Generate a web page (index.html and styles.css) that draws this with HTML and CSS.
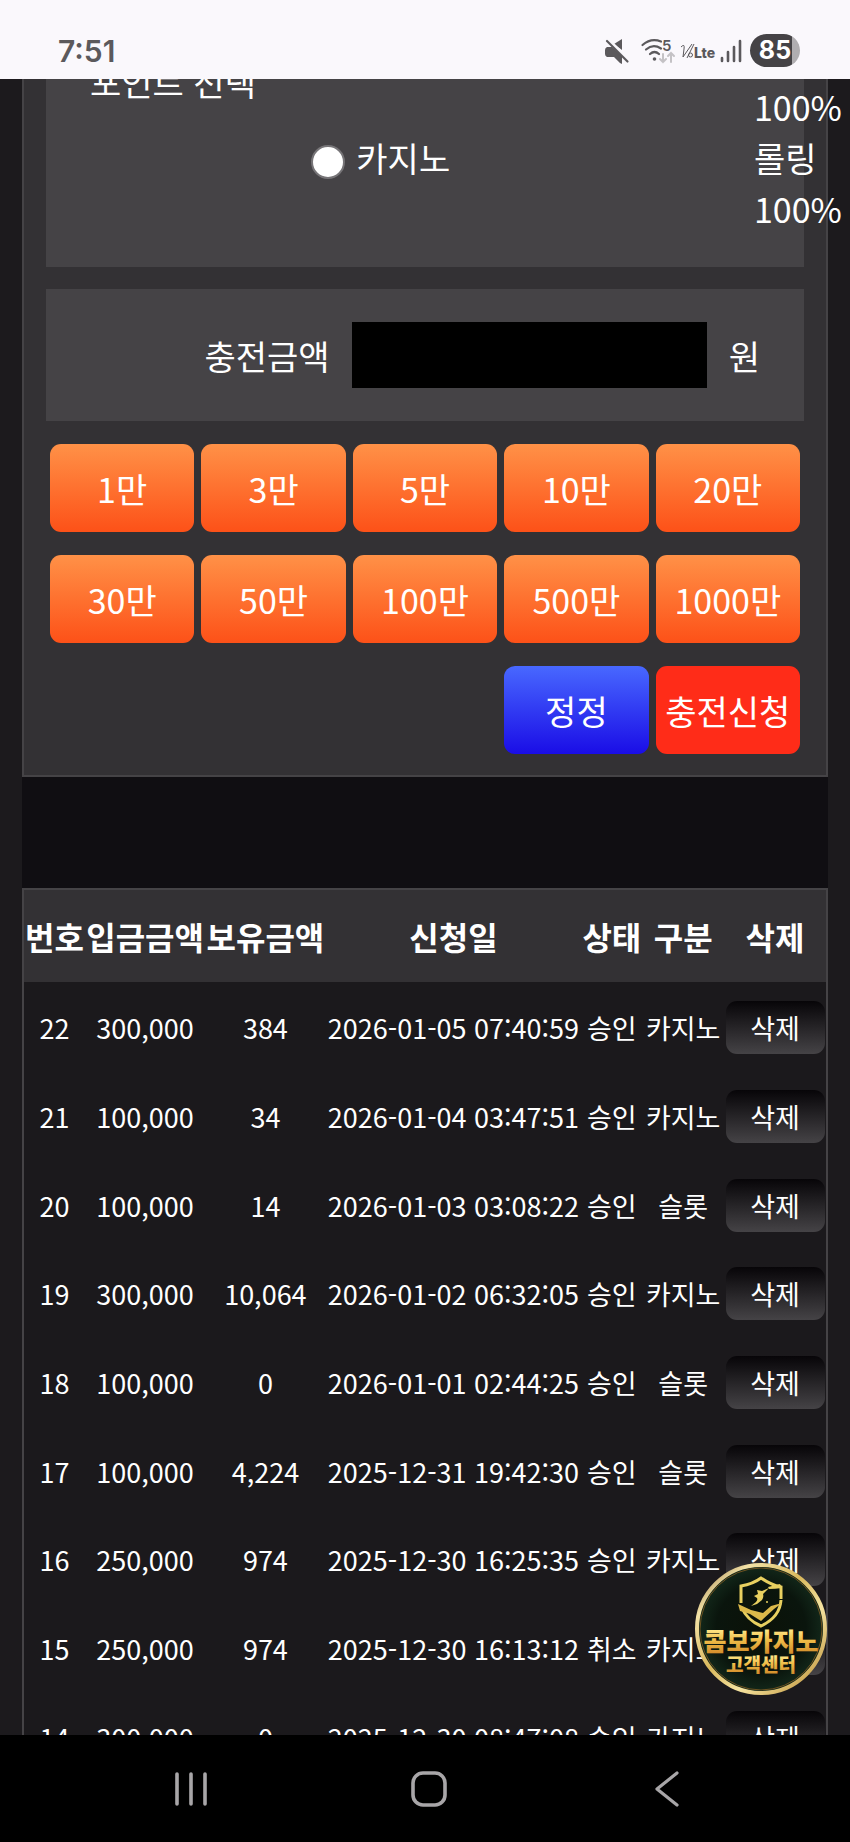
FILE: index.html
```html
<!DOCTYPE html>
<html lang="ko">
<head>
  <meta charset="UTF-8">
  <meta name="viewport" content="width=device-width, initial-scale=1.0">
  <title>충전신청</title>
  <link rel="stylesheet" href="styles.css">
</head>
<body>
  <header class="status-bar">
    <span class="clock">7:51</span>
    <div class="status-icons">
      <svg width="24" height="26" viewBox="0 0 24 26" fill="#5b595c">
        <path d="M17 1v11l-8-6z"/>
        <path d="M2 9h5l10 9v8l-2-1-6-6H2q-2-1-2-3v-4q0-2 2-3z"/>
        <path d="M3.500 1L23.500 21" stroke="#faf8fc" stroke-width="2"/>
        <path d="M2 3L22.500 23.500" stroke="#5b595c" stroke-width="2.200" stroke-linecap="round"/>
      </svg>
      <svg class="wifi" width="34" height="26" viewBox="0 0 34 26" fill="none" stroke="#5b595c" stroke-width="2.200" stroke-linecap="round">
        <path d="M1.500 7Q10 -0.500 20 3.500"/>
        <path d="M5 11.500Q12 5.500 20 10.500"/>
        <path d="M9 16q4.500-4 9 0"/>
        <circle cx="13.500" cy="21" r="1.800" fill="#5b595c" stroke="none"/>
        <path d="M22 16v8m-3-3l3 3 3-3M30 24v-9m-3 3l3-3 3 3" stroke="#c4c2c5" stroke-width="2"/>
        <text class="wifi-num" x="21" y="13">5</text>
      </svg>
      <svg class="volte" width="33" height="26" viewBox="0 0 33 26">
        <path d="M1 9q4-4 3 2l-1 8L12 6M7 20L14 6" fill="none" stroke="#5b595c" stroke-width="1"/>
        <circle cx="10.500" cy="17" r="2" fill="none" stroke="#5b595c" stroke-width="1"/>
        <text class="volte-text" x="14" y="20">Lte</text>
      </svg>
      <svg class="signal" width="22" height="26" viewBox="0 0 22 26" stroke="#5b595c" stroke-width="2.600" stroke-linecap="round">
        <path d="M2 20v3M8 14v9M14 9v14M20 3v20"/>
      </svg>
      <span class="battery">85</span>
    </div>
  </header>

  <main class="page">
    <form class="charge-form">
      <div class="panel point-panel">
        <span class="point-title">포인트 선택</span>
        <label class="point-option"><input type="radio" name="point" value="casino">카지노</label>
        <p class="rolling">100%<br>롤링<br>100%</p>
      </div>
      <div class="panel amount-panel">
        <label for="amount">충전금액</label>
        <input type="text" id="amount" name="amount">
        <span>원</span>
      </div>
      <div class="button-grid">
        <button type="button">1만</button>
        <button type="button">3만</button>
        <button type="button">5만</button>
        <button type="button">10만</button>
        <button type="button">20만</button>
        <button type="button">30만</button>
        <button type="button">50만</button>
        <button type="button">100만</button>
        <button type="button">500만</button>
        <button type="button">1000만</button>
        <button type="reset" class="reset">정정</button>
        <button type="submit" class="submit">충전신청</button>
      </div>
    </form>

    <section class="history">
      <table>
        <colgroup>
          <col class="col-no">
          <col class="col-money">
          <col class="col-money">
          <col class="col-date">
          <col class="col-no">
          <col class="col-type">
          <col class="col-del">
        </colgroup>
        <thead>
          <tr><th>번호</th><th>입금금액</th><th>보유금액</th><th>신청일</th><th>상태</th><th>구분</th><th>삭제</th></tr>
        </thead>
        <tbody>
          <tr><td>22</td><td>300,000</td><td>384</td><td>2026-01-05 07:40:59</td><td>승인</td><td>카지노</td><td><button type="button">삭제</button></td></tr>
          <tr><td>21</td><td>100,000</td><td>34</td><td>2026-01-04 03:47:51</td><td>승인</td><td>카지노</td><td><button type="button">삭제</button></td></tr>
          <tr><td>20</td><td>100,000</td><td>14</td><td>2026-01-03 03:08:22</td><td>승인</td><td>슬롯</td><td><button type="button">삭제</button></td></tr>
          <tr><td>19</td><td>300,000</td><td>10,064</td><td>2026-01-02 06:32:05</td><td>승인</td><td>카지노</td><td><button type="button">삭제</button></td></tr>
          <tr><td>18</td><td>100,000</td><td>0</td><td>2026-01-01 02:44:25</td><td>승인</td><td>슬롯</td><td><button type="button">삭제</button></td></tr>
          <tr><td>17</td><td>100,000</td><td>4,224</td><td>2025-12-31 19:42:30</td><td>승인</td><td>슬롯</td><td><button type="button">삭제</button></td></tr>
          <tr><td>16</td><td>250,000</td><td>974</td><td>2025-12-30 16:25:35</td><td>승인</td><td>카지노</td><td><button type="button">삭제</button></td></tr>
          <tr><td>15</td><td>250,000</td><td>974</td><td>2025-12-30 16:13:12</td><td>취소</td><td>카지노</td><td><button type="button">삭제</button></td></tr>
          <tr><td>14</td><td>300,000</td><td>0</td><td>2025-12-30 08:47:08</td><td>승인</td><td>카지노</td><td><button type="button">삭제</button></td></tr>
        </tbody>
      </table>
    </section>

    <!-- floating customer center button -->
    <a class="support" href="#" aria-label="콤보카지노 고객센터">
      <svg width="132" height="132" viewBox="0 0 132 132">
        <defs>
          <linearGradient id="ring" x1="0" y1="0" x2="1" y2="1">
            <stop offset="0" stop-color="#8a6a3a"/>
            <stop offset=".2" stop-color="#f3e2a6"/>
            <stop offset=".45" stop-color="#d9b85c"/>
            <stop offset=".65" stop-color="#f5e3a0"/>
            <stop offset="1" stop-color="#b88a2e"/>
          </linearGradient>
          <radialGradient id="disc">
            <stop offset="0" stop-color="#0b1208"/>
            <stop offset=".7" stop-color="#0a150d"/>
            <stop offset="1" stop-color="#13291b"/>
          </radialGradient>
          <linearGradient id="gold" x1="0" y1="0" x2="0" y2="1">
            <stop offset="0.200" stop-color="#ffe98a"/>
            <stop offset=".5" stop-color="#f0bd48"/>
            <stop offset="1" stop-color="#c87d22"/>
          </linearGradient>
        </defs>
        <circle cx="66" cy="66" r="64" fill="url(#disc)" stroke="url(#ring)" stroke-width="4"/>
        <circle cx="66" cy="66" r="61" fill="none" stroke="#6d5220" stroke-width="1"/>
        <g fill="none" stroke="#e8d060" stroke-width="3">
          <path d="M46 40V23Q58 21 66 15Q76 22 86 24V36"/>
          <path d="M47 45Q52 57 66 63Q85 54 86 37"/>
        </g>
        <path d="M62 27l5 1 7-3-6 6q1 3-1 6l-5 4-6 2 5-4q2-2 1-4l-3-2 4-2z" fill="#e8d060"/>
        <path d="M73 24l12-3 2 4q-7 1-13 1z" fill="#e8d060"/>
        <path d="M43 41l13 6 12 3 8-7 11-3-8 6-13 12-11-7-10-3z" fill="#dcb94a"/>
        <circle cx="72" cy="39" r="1" fill="#e8d060"/>
        <text class="support-name" x="66" y="88">콤보카지노</text>
        <text class="support-sub" x="66" y="109">고객센터</text>
      </svg>
    </a>
  </main>

  <nav class="nav-bar">
    <button type="button" aria-label="최근 앱">
      <svg width="36" height="36" viewBox="0 0 36 36" stroke="#a8a6a8" stroke-width="3.600" stroke-linecap="round">
        <path d="M4 3v30M18 3v30M32 3v30"/>
      </svg>
    </button>
    <button type="button" aria-label="홈">
      <svg width="36" height="36" viewBox="0 0 36 36" fill="none" stroke="#a8a6a8" stroke-width="3.600">
        <rect x="2" y="2" width="32" height="32" rx="10"/>
      </svg>
    </button>
    <button type="button" aria-label="뒤로">
      <svg width="36" height="36" viewBox="0 0 36 36" fill="none" stroke="#a8a6a8" stroke-width="3.200" stroke-linecap="round" stroke-linejoin="round">
        <path d="M28 2L8 18l20 16"/>
      </svg>
    </button>
  </nav>
</body>
</html>
```

FILE: styles.css
```css
* {
  box-sizing: border-box;
}
body {
  margin: 0;
  height: 100vh;
  display: flex;
  flex-direction: column;
  overflow: hidden;
  background: #1c1a1d;
  color: #fff;
  font-family: "Noto Sans CJK KR", sans-serif;
  font-size: 34px;
  line-height: 51px;
}
button, input {
  font: inherit;
  color: inherit;
  border: none;
  padding: 0;
}
svg {
  display: block;
  overflow: visible;
}

/* status bar */
.status-bar {
  flex: none;
  height: 79px;
  padding: 22px 50px 0 58px;
  display: flex;
  justify-content: space-between;
  background: #faf8fc;
  color: #5b595c;
  font-family: Inter, sans-serif;
}
.clock {
  font-size: 30px;
  line-height: 58px;
  font-weight: 600;
}
.status-icons {
  display: flex;
  align-items: center;
  height: 57px;
}
.wifi {
  margin-left: 12px;
}
.wifi-num {
  font-family: Inter, sans-serif;
  font-size: 15px;
  font-weight: 600;
  fill: #5b595c;
  stroke: none;
}
.volte {
  margin-left: 5px;
}
.volte-text {
  font-family: Inter, sans-serif;
  font-size: 14px;
  font-weight: 800;
  fill: #5b595c;
}
.signal {
  margin-left: 7px;
}
.battery {
  width: 50px;
  height: 33px;
  margin-left: 8px;
  border-radius: 17px;
  background: linear-gradient(90deg, #454346 84%, #b0aeb1 84%);
  color: #fff;
  font-size: 25px;
  line-height: 33px;
  font-weight: 700;
  text-align: center;
}

/* page */
.page {
  flex: 1;
  min-height: 0;
  position: relative;
  overflow: hidden;
  padding: 0 22px;
}
.charge-form {
  padding: 0 22px 21px;
  background: #333134;
  border: 2px solid #454346;
  border-top: none;
}
.panel {
  background: #454346;
}
.point-panel {
  margin-top: -23px;
  padding: 0 0 33px 44px;
  display: grid;
  grid-template-columns: 1fr 2fr 50px;
  grid-template-rows: 51px 1fr;
  row-gap: 25px;
}
.point-title {
  grid-column: 1;
}
.point-option {
  grid-column: 2;
  grid-row: 2;
  display: flex;
  align-items: center;
  align-self: start;
  gap: 11px;
}
.point-option input {
  appearance: none;
  width: 34px;
  height: 34px;
  margin: 8px 0 0;
  border: 2px solid #767477;
  border-radius: 50%;
  background: #fff;
}
.rolling {
  grid-column: 3;
  grid-row: 1 / 3;
  margin: 25px 0 0;
  white-space: nowrap;
}
.amount-panel {
  margin: 22px 0 23px;
  padding: 33px 44px;
  display: flex;
  align-items: center;
  justify-content: flex-end;
  gap: 22px;
}
.amount-panel input {
  width: 53%;
  height: 66px;
  padding: 0 12px;
  background: #000;
}
.button-grid {
  display: grid;
  grid-template-columns: repeat(5, 1fr);
  gap: 23px 7px;
  padding: 0 4px;
}
.button-grid button {
  height: 88px;
  border-radius: 11px;
  background: linear-gradient(#ff9147, #fd5118);
  white-space: nowrap;
  cursor: pointer;
}
.button-grid .reset {
  grid-column: 4;
  background: linear-gradient(#4868ff, #1a0de6);
}
.button-grid .submit {
  background: #ff2c18;
}

/* history table */
.history {
  padding-top: 111px;
  background: #100e12;
}
.history table {
  width: 100%;
  table-layout: fixed;
  border-collapse: separate;
  border-spacing: 0;
  border: 2px solid #454346;
  background: #1b191c;
  text-align: center;
  white-space: nowrap;
}
.col-no {
  width: 7.6%;
}
.col-money {
  width: 15%;
}
.col-date {
  width: 31.9%;
}
.col-type {
  width: 10.2%;
}
.col-del {
  width: 12.7%;
}
.history th {
  height: 92px;
  padding: 0;
  background: #333134;
  font-size: 32px;
  font-weight: 700;
}
.history td {
  height: 89px;
  padding: 2px 0 0;
  font-size: 27px;
}
.history tr:nth-child(3n) td {
  height: 88px;
}
.history td button {
  display: block;
  width: 99px;
  height: 53px;
  margin: 0 auto;
  border-radius: 11px;
  background: linear-gradient(#070508, #454346);
  cursor: pointer;
}

.support {
  position: absolute;
  right: 23px;
  bottom: 40px;
}
.support-name, .support-sub {
  font-weight: 900;
  fill: url(#gold);
  text-anchor: middle;
}
.support-name {
  font-size: 25px;
}
.support-sub {
  font-size: 19px;
}

/* system navigation */
.nav-bar {
  flex: none;
  height: 107px;
  padding: 0 64px 0 72px;
  display: grid;
  grid-template-columns: repeat(3, 1fr);
  background: #000;
}
.nav-bar button {
  display: flex;
  align-items: center;
  justify-content: center;
  background: none;
}
```
